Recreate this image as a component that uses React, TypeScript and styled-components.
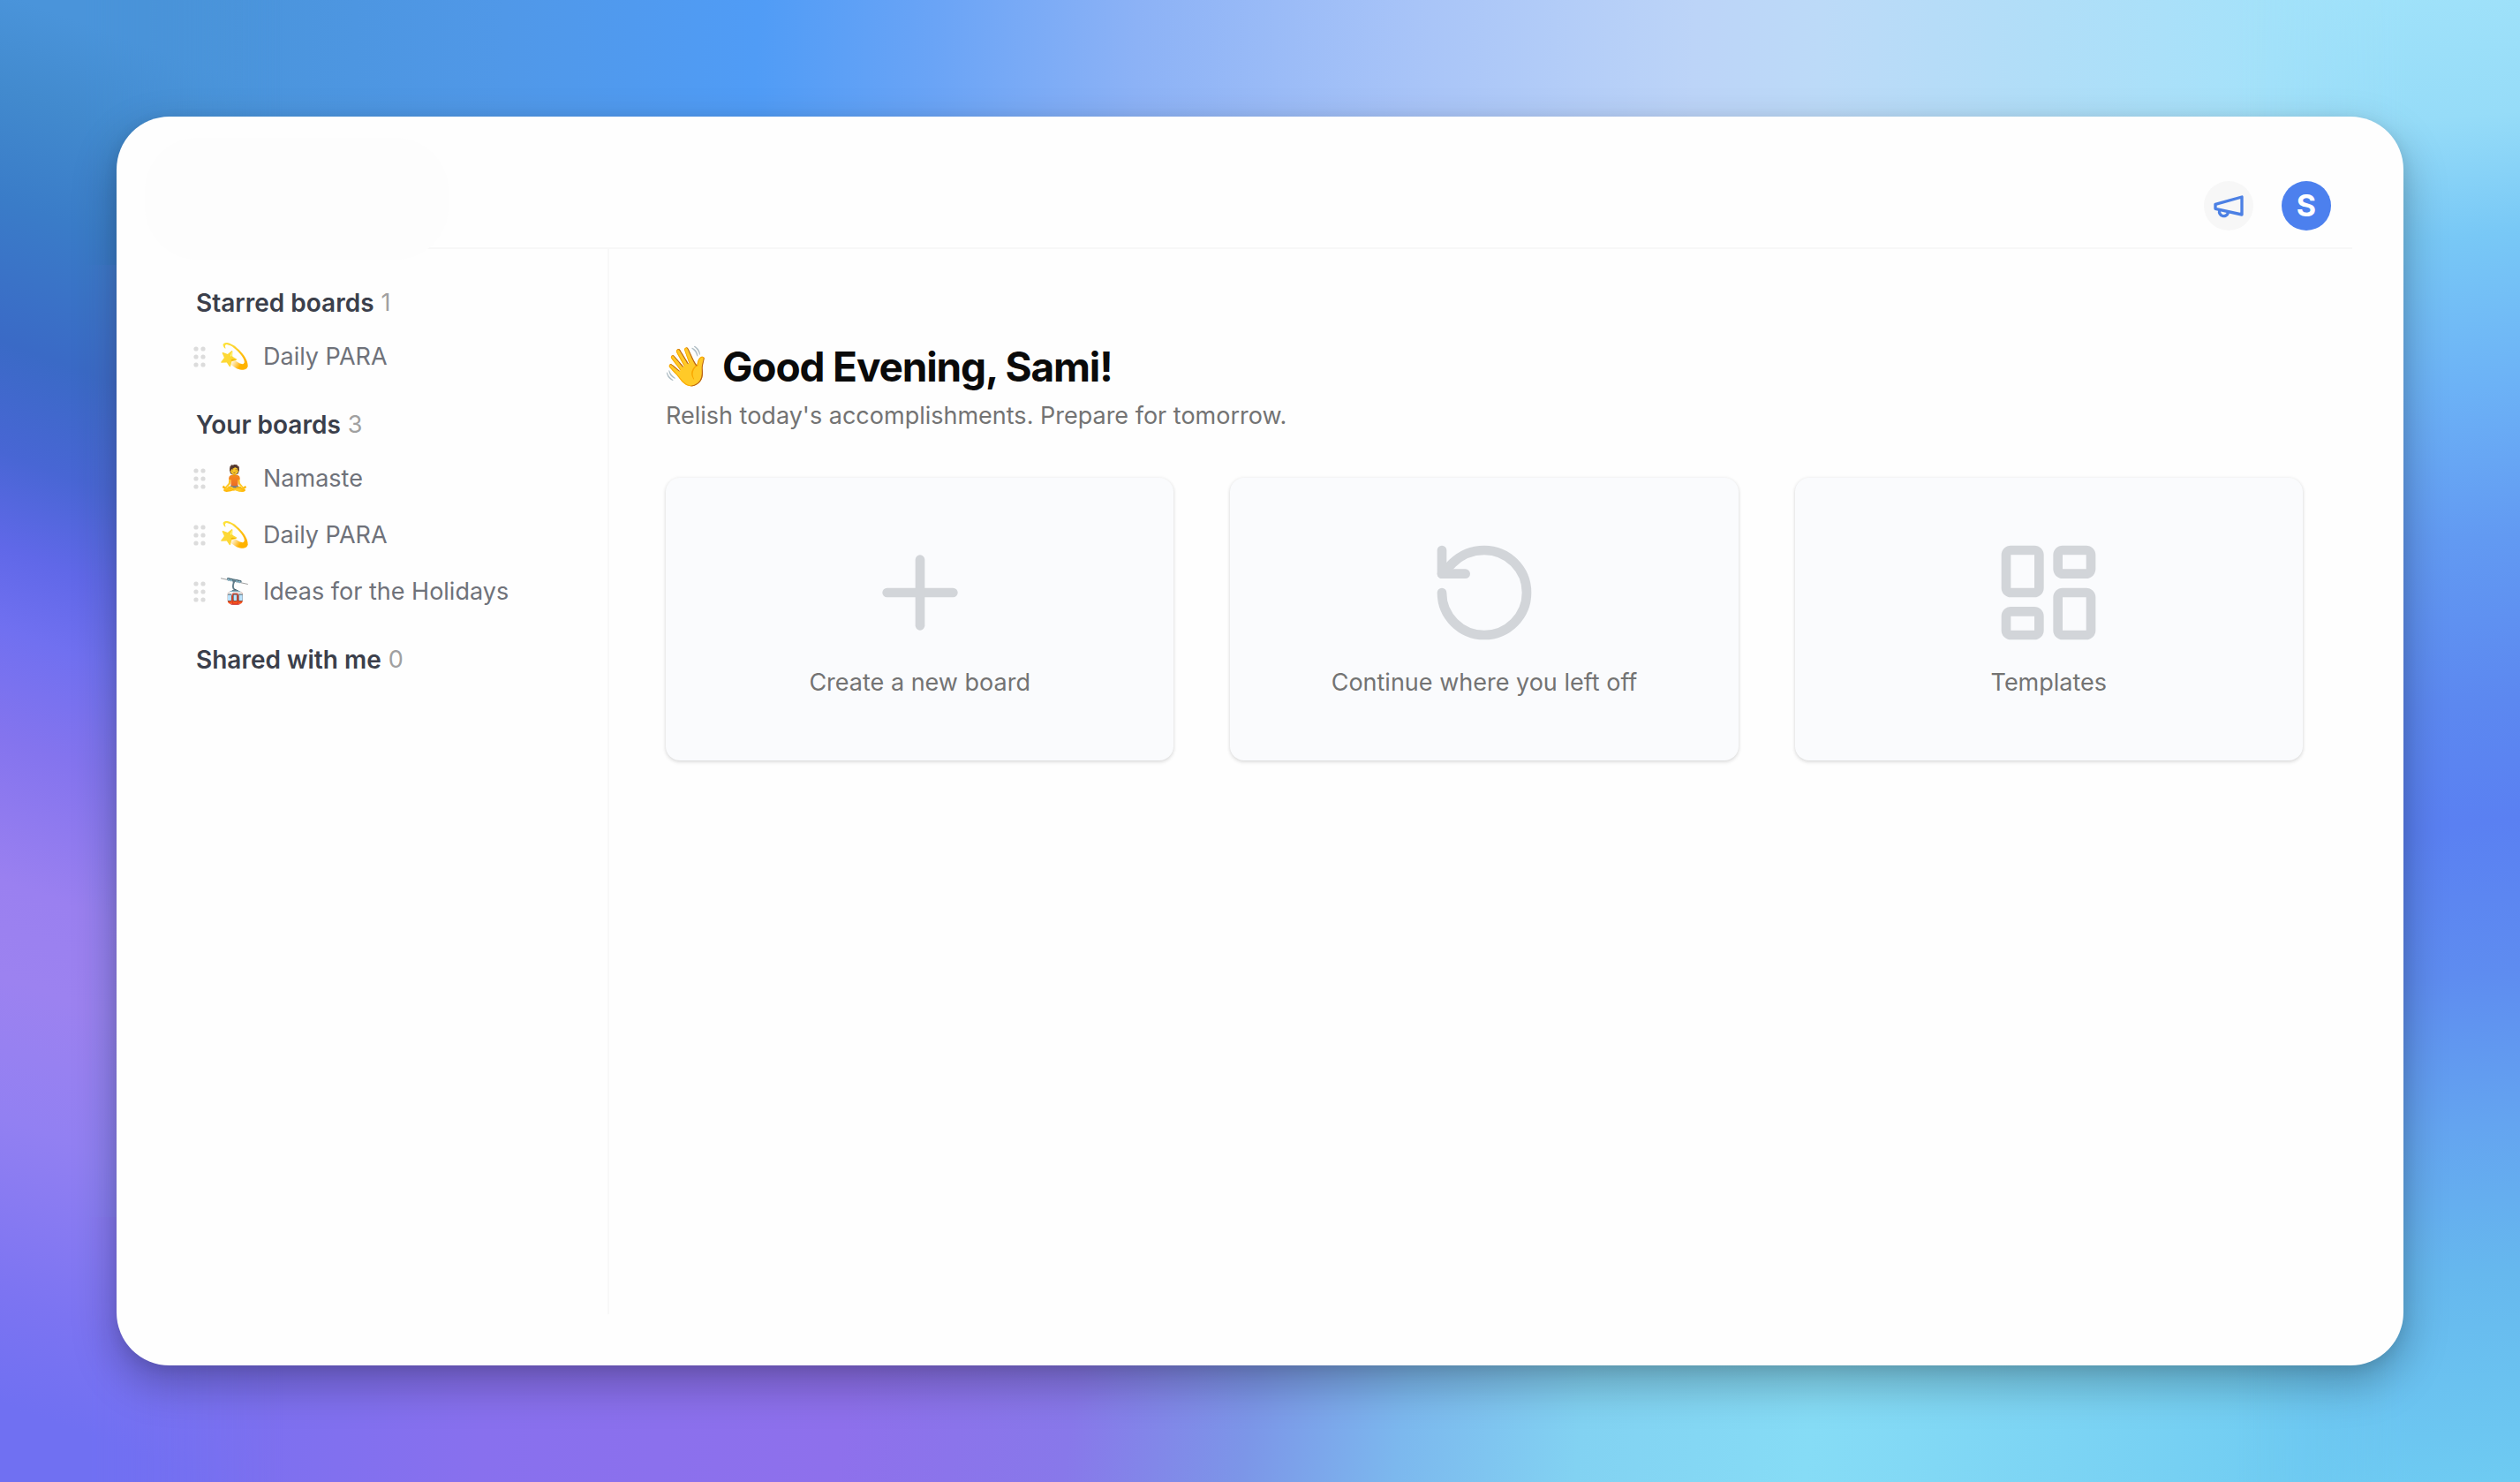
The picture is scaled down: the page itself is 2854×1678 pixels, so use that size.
import React from "react";
import styled, { createGlobalStyle } from "styled-components";
import { LayoutDashboard, Plus, RotateCcw } from "lucide-react";

const GlobalStyle = createGlobalStyle`
  *, *::before, *::after { box-sizing: border-box; }
  body {
    margin: 0;
    font-family: Inter, "Noto Sans", "Noto Color Emoji", sans-serif;
    font-size: 27px;
    line-height: 44px;
    color: #737373;
  }
  h1, h2, p, ul { margin: 0; padding: 0; }
  button { font: inherit; color: inherit; border: 0; padding: 0; cursor: pointer; }
`;

const Page = styled.div`
  display: grid;
  grid-template: minmax(100vh, auto) / minmax(0, 1fr);
  overflow: hidden;
  background: #6d8cf2;
  & > * { grid-area: 1 / 1; }
`;

const LeftGlow = styled.div`
  justify-self: start;
  width: 320px;
  background: linear-gradient(
    200deg,
    #4a94da 0%, #4a94da 6%, #428ace 12%, #3a7cc8 19%, #3a6ac6 28%, #4866d4 35%, #6068e8 41%,
    #7070f0 46%, #8474ee 53%, #9a80f0 62%, #9c82f0 68%, #9280f2 77%, #7c74f2 88%, #7070f2 95%
  );
  mask-image: linear-gradient(90deg, #000 30%, transparent 100%);
`;

const RightGlow = styled.div`
  justify-self: end;
  width: 320px;
  background: linear-gradient(
    175deg,
    #a0e2fa 0%, #96dcf8 9%, #78c8f6 17%, #6cb2f6 27%, #629af2 37%,
    #5c88f0 48%, #5a80f2 56%, #5e8cf0 66%, #64a4f0 76%, #66b8ee 86%, #6ecbf2 100%
  );
  mask-image: linear-gradient(270deg, #000 40%, transparent 100%);
`;

const TopGlow = styled.div`
  align-self: start;
  height: 300px;
  background: linear-gradient(
    92deg,
    #448acc 0%, #4a94da 8%, #5098e8 20%, #509cf6 30%, #6aa4f6 37%,
    #8cb2f6 45%, #a8c4f8 56%, #bcd4f8 67%, #bcdaf8 72%, #b0def8 81%, #a4e2fa 90%, #9adcf8 100%
  );
`;

const BottomGlow = styled.div`
  align-self: end;
  height: 300px;
  background: linear-gradient(
    98deg,
    #6e6ef2 0%, #7a70f0 9%, #8870ee 20%, #8e70ec 34%, #8878ea 43%,
    #7c96e8 50%, #7cb8ee 56%, #82d2f2 63%, #86dcf6 72%, #7cd4f4 82%, #70ccf2 91%, #6cc2f0 100%
  );
`;

const Shell = styled.div`
  z-index: 1;
  display: flex;
  flex-direction: column;
  margin: 132px;
  padding: 58px;
  border-radius: 60px;
  background: #fefefe;
  box-shadow: 0 20px 50px rgba(0, 0, 0, 0.28), 0 4px 16px rgba(0, 0, 0, 0.08);
`;

const Header = styled.header`
  display: flex;
  justify-content: space-between;
  align-items: center;
  height: 92px;
  padding: 0 24px 4px 0;
  border-bottom: 2px solid #f7f7f7;
`;

const BrandArea = styled.div`
  flex: none;
  width: 344px;
  height: 138px;
  margin: -16px 0 0 -26px;
  border-radius: 60px;
  background: #fdfdfd;
`;

const Actions = styled.div`
  display: flex;
  gap: 32px;
`;

const RoundButton = styled.button<{ $filled?: boolean }>`
  display: grid;
  place-items: center;
  width: 56px;
  height: 56px;
  border-radius: 50%;
  font-size: 34px;
  font-weight: 700;
  background: ${(p) => (p.$filled ? "#4c80ee" : "#f7f7f7")};
  color: ${(p) => (p.$filled ? "#ffffff" : "#4c80e4")};
`;

const Body = styled.div`
  display: flex;
  flex: 1;
`;

const Sidebar = styled.nav`
  display: flex;
  flex-direction: column;
  gap: 16px;
  width: 500px;
  padding: 32px 24px 32px 28px;
  border-right: 2px solid #f8f8f8;
`;

const SectionTitle = styled.h2`
  display: flex;
  align-items: center;
  gap: 8px;
  height: 58px;
  padding-left: 4px;
  font-size: 28px;
  font-weight: 600;
  color: #3b3f4b;
`;

const Count = styled.span`
  font-size: 27px;
  font-weight: 400;
  color: #a0a0a0;
`;

const BoardList = styled.ul`
  list-style: none;
`;

const BoardRow = styled.li`
  display: flex;
  align-items: center;
  height: 64px;
`;

const Grip = styled.svg`
  flex: none;
  width: 16px;
  height: 28px;
  fill: #dcdcdc;
`;

const BoardLink = styled.a`
  display: flex;
  align-items: center;
  gap: 16px;
  padding-left: 16px;
  color: #6f727a;
  text-decoration: none;
`;

const Emoji = styled.span<{ $large?: boolean }>`
  display: flex;
  flex: none;
  justify-content: center;
  width: ${(p) => (p.$large ? 48 : 32)}px;
  font-family: "Noto Color Emoji", sans-serif;
  font-size: ${(p) => (p.$large ? 44 : 28)}px;
  font-weight: 400;
  letter-spacing: 0;
`;

const Main = styled.main`
  flex: 1;
  min-width: 0;
  padding: 103px 56px 64px 64px;
`;

const Greeting = styled.h1`
  display: flex;
  align-items: center;
  gap: 16px;
  font-size: 46px;
  line-height: 60px;
  font-weight: 700;
  letter-spacing: -0.025em;
  color: #0a0a0a;
`;

const Subtitle = styled.p`
  padding: 4px 0;
`;

const Cards = styled.div`
  display: grid;
  grid-template-columns: repeat(3, minmax(0, 1fr));
  gap: 64px;
  margin-top: 44px;
`;

const Card = styled.button`
  display: flex;
  flex-direction: column;
  align-items: center;
  justify-content: center;
  gap: 16px;
  height: 320px;
  border-radius: 16px;
  background: #fafbfd;
  box-shadow: 0 2px 4px rgba(0, 0, 0, 0.12), 0 0 4px rgba(0, 0, 0, 0.06);
  svg { color: #d2d5d9; }
`;

function GripDots() {
  return (
    <Grip viewBox="0 0 16 28" aria-hidden="true">
      {[4, 12].map((x) => [5, 14, 23].map((y) => <circle key={`${x}-${y}`} cx={x} cy={y} r={2.6} />))}
    </Grip>
  );
}

function MegaphoneIcon() {
  return (
    <svg width="40" height="40" viewBox="0 0 24 24" fill="none" stroke="currentColor" strokeWidth="2" strokeLinecap="round" strokeLinejoin="round" aria-hidden="true">
      <path d="m3 11 18-5v12L3 14v-3z" />
      <path d="M11.6 16.8a3 3 0 1 1-5.8-1.6" />
    </svg>
  );
}

type Board = { emoji: string; name: string };
type Section = { title: string; boards: Board[] };

const sections: Section[] = [
  { title: "Starred boards", boards: [{ emoji: "💫", name: "Daily PARA" }] },
  {
    title: "Your boards",
    boards: [
      { emoji: "🧘", name: "Namaste" },
      { emoji: "💫", name: "Daily PARA" },
      { emoji: "🚡", name: "Ideas for the Holidays" },
    ],
  },
  { title: "Shared with me", boards: [] },
];

const actions = [
  { label: "Create a new board", Icon: Plus },
  { label: "Continue where you left off", Icon: RotateCcw },
  { label: "Templates", Icon: LayoutDashboard },
];

export default function App() {
  return (
    <Page>
      <GlobalStyle />
      <TopGlow />
      <BottomGlow />
      <LeftGlow />
      <RightGlow />
      <Shell>
        <Header>
          <BrandArea />
          <Actions>
            <RoundButton aria-label="Announcements">
              <MegaphoneIcon />
            </RoundButton>
            <RoundButton $filled>S</RoundButton>
          </Actions>
        </Header>
        <Body>
          <Sidebar>
            {sections.map((section) => (
              <section key={section.title}>
                <SectionTitle>
                  {section.title} <Count>{section.boards.length}</Count>
                </SectionTitle>
                <BoardList>
                  {section.boards.map((board) => (
                    <BoardRow key={board.name}>
                      <GripDots />
                      <BoardLink href="#">
                        <Emoji>{board.emoji}</Emoji>
                        {board.name}
                      </BoardLink>
                    </BoardRow>
                  ))}
                </BoardList>
              </section>
            ))}
          </Sidebar>
          <Main>
            <Greeting>
              <Emoji $large>👋</Emoji>
              Good Evening, Sami!
            </Greeting>
            <Subtitle>Relish today's accomplishments. Prepare for tomorrow.</Subtitle>
            <Cards>
              {actions.map(({ label, Icon }) => (
                <Card key={label}>
                  <Icon size={128} />
                  {label}
                </Card>
              ))}
            </Cards>
          </Main>
        </Body>
      </Shell>
    </Page>
  );
}
